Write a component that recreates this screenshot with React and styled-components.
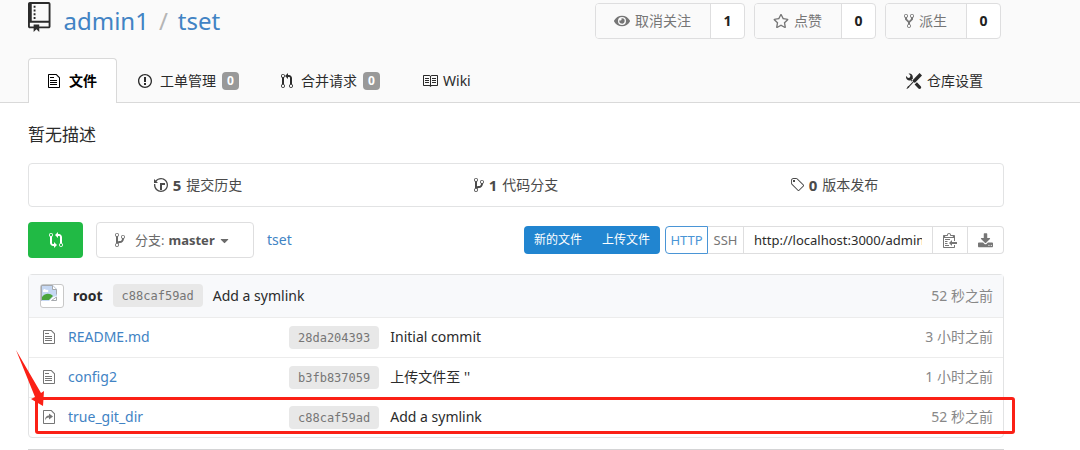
import React from 'react';
import styled, { createGlobalStyle } from 'styled-components';
import { FaEye, FaRegStar, FaCaretDown } from 'react-icons/fa';

const GlobalStyle = createGlobalStyle`
  *, *::before, *::after { box-sizing: border-box; }
  body {
    margin: 0;
    background: #fff;
    color: #2b2b2b;
    font-family: "Noto Sans", "Noto Sans CJK SC", sans-serif;
    font-size: 14px;
    line-height: 20px;
  }
  body, #root { overflow-x: clip; }
  button, input, select { font: inherit; color: inherit; margin: 0; }
  button { cursor: pointer; }
  a { color: #4183c4; text-decoration: none; }
  svg { display: block; flex: none; }
`;

const ICONS = {
  repo: [12, 'M4 9H3V8h1v1zm0-3H3v1h1V6zm0-2H3v1h1V4zm0-2H3v1h1V2zm8-1v12c0 .55-.45 1-1 1H6v2l-1.5-1.5L3 16v-2H1c-.55 0-1-.45-1-1V1c0-.55.45-1 1-1h10c.55 0 1 .45 1 1zm-1 10H1v2h2v-1h3v1h5v-2zm0-10H2v9h9V1z'],
  file: [12, 'M6 5H2V4h4v1zM2 8h7V7H2v1zm0 2h7V9H2v1zm0 2h7v-1H2v1zm10-7.5V14c0 .55-.45 1-1 1H1c-.55 0-1-.45-1-1V2c0-.55.45-1 1-1h7.5L12 4.5zM11 5L8 2H1v12h10V5z'],
  symlink: [12, 'M8.5 1H1c-.55 0-1 .45-1 1v12c0 .55.45 1 1 1h10c.55 0 1-.45 1-1V4.5L8.5 1zM11 14H1V2h7l3 3v9zM6 4.5l4 3-4 3v-2c-.98-.02-1.84.22-2.55.7-.71.48-1.19 1.25-1.45 2.3.02-1.64.39-2.88 1.13-3.73.73-.84 1.69-1.27 2.88-1.27v-2H6z'],
  issue: [14, 'M7 2.3c3.14 0 5.7 2.56 5.7 5.7s-2.56 5.7-5.7 5.7A5.71 5.71 0 0 1 1.3 8c0-3.14 2.56-5.7 5.7-5.7zM7 1C3.14 1 0 4.14 0 8s3.14 7 7 7 7-3.14 7-7-3.14-7-7-7zm1 3H6v5h2V4zm0 6H6v2h2v-2z'],
  pull: [12, 'M11 11.28V5c-.03-.78-.34-1.47-.94-2.06C9.46 2.35 8.78 2.03 8 2H7V0L4 3l3 3V4h1c.27.02.48.11.69.31.21.2.3.42.31.69v6.28A1.993 1.993 0 0 0 10 15a1.993 1.993 0 0 0 1-3.72zm-1 2.92c-.66 0-1.2-.55-1.2-1.2 0-.65.55-1.2 1.2-1.2.65 0 1.2.55 1.2 1.2 0 .65-.55 1.2-1.2 1.2zM4 3c0-1.11-.89-2-2-2a1.993 1.993 0 0 0-1 3.72v6.56A1.993 1.993 0 0 0 2 15a1.993 1.993 0 0 0 1-3.72V4.72c.59-.34 1-.98 1-1.72zm-.8 10c0 .66-.55 1.2-1.2 1.2-.65 0-1.2-.55-1.2-1.2 0-.65.55-1.2 1.2-1.2.65 0 1.2.55 1.2 1.2zM2 4.2C1.34 4.2.8 3.65.8 3c0-.65.55-1.2 1.2-1.2.65 0 1.2.55 1.2 1.2 0 .65-.55 1.2-1.2 1.2z'],
  book: [16, 'M3 5h4v1H3V5zm0 3h4V7H3v1zm0 2h4V9H3v1zm11-5h-4v1h4V5zm0 2h-4v1h4V7zm0 2h-4v1h4V9zm2-6v9c0 .55-.45 1-1 1H9.5l-1 1-1-1H2c-.55 0-1-.45-1-1V3c0-.55.45-1 1-1h5.5l1 1 1-1H15c.55 0 1 .45 1 1zm-8 .5L7.5 3H2v9h6V3.5zm7-.5H9.5l-.5.5V12h6V3z'],
  tools: [16, 'M4.48 7.27c.26.26 1.28 1.33 1.28 1.33l.56-.58-.88-.91 1.69-1.8s-.76-.74-.43-.45c.32-1.19.03-2.51-.87-3.44C4.93.5 3.66.2 2.52.51l1.93 2-.51 1.96-1.89.52-1.93-1.99C-.19 4.17.1 5.48 1 6.4c.94.98 2.29 1.26 3.48.87zm6.44 1.94l-2.33 2.3 3.84 3.98c.31.33.73.49 1.14.49.41 0 .82-.16 1.14-.49.63-.65.63-1.7 0-2.35l-3.79-3.93zM16 2.53L13.55 0 6.33 7.46l.88.91-4.31 4.46-.99.53-1.39 2.27.35.37 2.2-1.44.51-1.02L7.9 9.08l.88.91L16 2.53z'],
  history: [14, 'M8 13H6V6h5v2H8v5zM7 1C4.81 1 2.87 2.02 1.59 3.59L0 2v4h4L2.5 4.5C3.55 3.17 5.17 2.3 7 2.3c3.14 0 5.7 2.56 5.7 5.7s-2.56 5.7-5.7 5.7A5.71 5.71 0 0 1 1.3 8c0-.34.03-.67.09-1H.08C.03 7.33 0 7.66 0 8c0 3.86 3.14 7 7 7s7-3.14 7-7-3.14-7-7-7z'],
  branch: [10, 'M10 5c0-1.11-.89-2-2-2a1.993 1.993 0 0 0-1 3.72v.3c-.02.52-.23.98-.63 1.38-.4.4-.86.61-1.38.63-.83.02-1.48.16-2 .45V4.72a1.993 1.993 0 0 0-1-3.72C.88 1 0 1.89 0 3a2 2 0 0 0 1 1.72v6.56c-.59.35-1 .99-1 1.72 0 1.11.89 2 2 2 1.11 0 2-.89 2-2 0-.53-.2-1-.53-1.36.09-.06.48-.41.59-.47.25-.11.56-.17.94-.17 1.05-.05 1.95-.45 2.75-1.25S8.95 7.77 9 6.73h-.02C9.59 6.37 10 5.73 10 5zM2 1.8c.66 0 1.2.55 1.2 1.2 0 .65-.55 1.2-1.2 1.2C1.35 4.2.8 3.65.8 3c0-.65.55-1.2 1.2-1.2zm0 12.41c-.66 0-1.2-.55-1.2-1.2 0-.65.55-1.2 1.2-1.2.65 0 1.2.55 1.2 1.2 0 .65-.55 1.2-1.2 1.2zm6-8c-.66 0-1.2-.55-1.2-1.2 0-.65.55-1.2 1.2-1.2.65 0 1.2.55 1.2 1.2 0 .65-.55 1.2-1.2 1.2z'],
  fork: [10, 'M8 1a1.993 1.993 0 0 0-1 3.72V6L5 8 3 6V4.72A1.993 1.993 0 0 0 2 1a1.993 1.993 0 0 0-1 3.72V6.5l3 3v1.78A1.993 1.993 0 0 0 5 15a1.993 1.993 0 0 0 1-3.72V9.5l3-3V4.72A1.993 1.993 0 0 0 8 1zM2 4.2C1.34 4.2.8 3.65.8 3c0-.65.55-1.2 1.2-1.2.65 0 1.2.55 1.2 1.2 0 .65-.55 1.2-1.2 1.2zm3 10c-.66 0-1.2-.55-1.2-1.2 0-.65.55-1.2 1.2-1.2.65 0 1.2.55 1.2 1.2 0 .65-.55 1.2-1.2 1.2zm3-10c-.66 0-1.2-.55-1.2-1.2 0-.65.55-1.2 1.2-1.2.65 0 1.2.55 1.2 1.2 0 .65-.55 1.2-1.2 1.2z'],
  tag: [14, 'M7.73 1.73C7.26 1.26 6.62 1 5.96 1H3.5C2.13 1 1 2.13 1 3.5v2.47c0 .66.27 1.3.73 1.77l6.06 6.06c.39.39 1.02.39 1.41 0l4.59-4.59a.996.996 0 0 0 0-1.41L7.73 1.73zM2.38 7.09c-.31-.3-.47-.7-.47-1.13V3.5c0-.88.72-1.59 1.59-1.59h2.47c.42 0 .83.16 1.13.47l6.14 6.13-4.73 4.73-6.13-6.15zM3.01 3h2v2H3V3h.01z'],
  compare: [14, 'M5 12H4c-.27-.02-.48-.11-.69-.31-.21-.2-.3-.42-.31-.69V4.72A1.993 1.993 0 0 0 2 1a1.993 1.993 0 0 0-1 3.72V11c.03.78.34 1.47.94 2.06.6.59 1.28.91 2.06.94h1v2l3-3-3-3v2zM2 1.8c.66 0 1.2.55 1.2 1.2 0 .65-.55 1.2-1.2 1.2C1.35 4.2.8 3.65.8 3c0-.65.55-1.2 1.2-1.2zm11 9.48V5c-.03-.78-.34-1.47-.94-2.06-.6-.59-1.28-.91-2.06-.94H9V0L6 3l3 3V4h1c.27.02.48.11.69.31.21.2.3.42.31.69v6.28A1.993 1.993 0 0 0 12 15a1.993 1.993 0 0 0 1-3.72zm-1 2.92c-.66 0-1.2-.55-1.2-1.2 0-.65.55-1.2 1.2-1.2.65 0 1.2.55 1.2 1.2 0 .65-.55 1.2-1.2 1.2z'],
  clippy: [14, 'M2 13h4v1H2v-1zm5-6H2v1h5V7zm2 3V8l-3 3 3 3v-2h5v-2H9zM4.5 9H2v1h2.5V9zM2 12h2.5v-1H2v1zm9 1h1v2c-.02.28-.11.52-.3.7-.19.18-.42.28-.7.3H1c-.55 0-1-.45-1-1V4c0-.55.45-1 1-1h3c0-1.11.89-2 2-2 1.11 0 2 .89 2 2h3c.55 0 1 .45 1 1v5h-1V6H1v9h10v-2zM2 5h8c0-.55-.45-1-1-1H8c-.55 0-1-.45-1-1s-.45-1-1-1-1 .45-1 1-.45 1-1 1H3c-.55 0-1 .45-1 1z'],
};

function Icon({ name, size = 16 }) {
  const [w, d] = ICONS[name];
  return (
    <svg width={(w * size) / 16} height={size} viewBox={`0 0 ${w} 16`} fill="currentColor" aria-hidden="true">
      <path d={d} />
    </svg>
  );
}

function DownloadIcon() {
  return (
    <svg width="15" height="15" viewBox="0 0 1664 1600" fill="currentColor" aria-hidden="true">
      <path d="M1280 1344q0-26-19-45t-45-19-45 19-19 45 19 45 45 19 45-19 19-45zm256 0q0-26-19-45t-45-19-45 19-19 45 19 45 45 19 45-19 19-45zm128-224v320q0 40-28 68t-68 28h-1472q-40 0-68-28t-28-68v-320q0-40 28-68t68-28h465l135 136q58 56 136 56t136-56l136-136h464q40 0 68 28t28 68zm-325-569q17 41-14 70l-448 448q-18 19-45 19t-45-19l-448-448q-31-29-14-70 17-39 59-39h256v-448q0-26 19-45t45-19h256q26 0 45 19t19 45v448h256q42 0 59 39z" />
    </svg>
  );
}

const Header = styled.header`
  padding: 0 76px 0 28px;
  background: #fafafa;
  border-bottom: 1px solid #d9d9d9;
`;
const TitleRow = styled.div`
  display: flex;
  justify-content: space-between;
  align-items: center;
  height: 42px;
`;
const Title = styled.h1`
  display: flex;
  align-items: flex-start;
  margin: 0;
  font-size: 24px;
  line-height: 38px;
  font-weight: 400;
`;
const TitlePath = styled.span`
  display: flex;
  gap: 10px;
  margin-left: 13px;
`;
const Slash = styled.span`
  color: #b5b5b5;
`;
const Actions = styled.div`
  display: flex;
  gap: 9px;
  padding-right: 3px;
`;
const ActionGroup = styled.div`
  display: flex;
  height: 36px;
  border: 1px solid #dededf;
  border-radius: 4px;
  background: #fff;
  overflow: hidden;
`;
const ActionButton = styled.button`
  display: flex;
  align-items: center;
  gap: 5px;
  padding: 0 19px 0 18px;
  border: 0;
  background: #fafafa;
  color: #767676;
`;
const ActionCount = styled.a`
  display: flex;
  align-items: center;
  justify-content: center;
  width: 34px;
  border-left: 1px solid #dededf;
  color: #212121;
  font-weight: 700;
`;

const Tabs = styled.nav`
  display: flex;
  height: 45px;
  margin: 16px 0 -1px;
`;
const Tab = styled.a`
  display: flex;
  align-items: center;
  gap: ${(p) => p.$gap || 8}px;
  padding: 0 20px;
  border: 1px solid transparent;
  border-bottom: 0;
  border-radius: 4px 4px 0 0;
  color: #2b2b2b;
  ${(p) => p.$active && `
    padding: 0 19px;
    background: #fff;
    border-color: #d9d9d9;
    color: #000;
    font-weight: 700;
  `}
  ${(p) => p.$end && 'margin-left: auto;'}
`;
const Badge = styled.span`
  width: 17px;
  margin-left: -2px;
  border-radius: 4px;
  background: #999;
  color: #fff;
  font-size: 12px;
  line-height: 18px;
  font-weight: 700;
  text-align: center;
`;

const Main = styled.main`
  padding: 0 76px 0 28px;
`;
const Description = styled.p`
  margin: 0;
  padding: 20px 0 16px;
  font-size: 17px;
  line-height: 24px;
`;
const Stats = styled.nav`
  display: grid;
  grid-template-columns: repeat(3, 1fr);
  height: 44px;
  padding: 0 10px;
  border: 1px solid #e2e3e4;
  border-radius: 4px;
`;
const Stat = styled.a`
  display: flex;
  align-items: center;
  justify-content: center;
  gap: 5px;
  color: #4a4a4a;
  b { font-size: 15px; }
`;

const Toolbar = styled.div`
  display: flex;
  align-items: center;
  height: 36px;
  margin: 15px 0 16px;
`;
const CompareButton = styled.button`
  display: flex;
  align-items: center;
  justify-content: center;
  width: 55px;
  height: 36px;
  padding: 0;
  border: 0;
  border-radius: 4px;
  background: #21ba45;
  color: #fff;
`;
const BranchPicker = styled.label`
  display: flex;
  align-items: center;
  width: 158px;
  height: 36px;
  margin: 0 13px;
  padding-left: 18px;
  border: 1px solid #dededf;
  border-radius: 4px;
  color: #6b6b6b;
  font-size: 13px;
`;
const BranchLabel = styled.span`
  margin: 0 4px 0 10px;
`;
const BranchSelect = styled.select`
  appearance: none;
  field-sizing: content;
  margin-right: 3px;
  padding: 0;
  border: 0;
  background: none;
  color: #555;
  font-weight: 700;
`;
const ToolbarEnd = styled.div`
  display: flex;
  align-items: center;
  gap: 5px;
  margin-left: auto;
`;
const FileButtons = styled.div`
  display: flex;
  height: 28px;
  border-radius: 4px;
  background: #2185d0;
`;
const FileButton = styled.button`
  padding: 0 10px;
  border: 0;
  background: none;
  color: #fff;
  font-size: 12px;
`;
const Clone = styled.div`
  display: flex;
  height: 28px;
`;
const CloneButton = styled.button`
  display: flex;
  align-items: center;
  justify-content: center;
  width: 36px;
  padding: 0;
  border: 1px solid #dededf;
  border-left-width: ${(p) => (p.$joined ? 0 : 1)}px;
  background: #fff;
  color: #767676;
  font-size: 13px;
  &:first-child {
    width: 43px;
    border-color: #4a95d6;
    border-radius: 4px 0 0 4px;
    color: #4a95d6;
  }
  &:last-child { border-radius: 0 4px 4px 0; }
`;
const CloneUrl = styled.input`
  width: 188px;
  padding: 0 10px;
  border: 1px solid #dededf;
  border-left: 0;
  border-right: 0;
  background: #fff;
  font-size: 13px;
  outline: 0;
`;

const FilesPanel = styled.section`
  position: relative;
  border: 1px solid #e2e3e4;
  border-radius: 4px;
`;
const FileTable = styled.table`
  width: 100%;
  table-layout: fixed;
  border-collapse: collapse;
  th, td {
    height: 40px;
    padding: 0;
    border-top: 1px solid #ececec;
    font-weight: 400;
    text-align: left;
  }
  thead th {
    height: 42px;
    border-top: 0;
    background: #f8f9fb;
  }
`;
const NameCol = styled.col`
  width: 260px;
`;
const TimeCol = styled.col`
  width: 120px;
`;
const Cell = styled.div`
  display: flex;
  align-items: center;
  gap: ${(p) => p.$gap}px;
  padding-left: ${(p) => p.$indent || 0}px;
  color: ${(p) => p.$color || 'inherit'};
`;
const Time = styled.div`
  padding-right: 10px;
  color: #888;
  text-align: right;
`;
const Avatar = styled.span`
  display: block;
  width: 24px;
  height: 24px;
  border: 1px solid #c8c8c8;
  border-radius: 3px;
  background: #fff;
`;
const Author = styled.b`
  margin-left: -1px;
`;
const Hash = styled.a`
  padding: 2px 9px 0;
  border-radius: 4px;
  background: #e8e8e8;
  color: #767676;
  font-family: "DejaVu Sans Mono", monospace;
  font-size: 12px;
  line-height: 21px;
`;
const Highlight = styled.div`
  position: absolute;
  left: 6px;
  right: -12px;
  bottom: 3px;
  height: 37px;
  border: 3px solid #fb2016;
  border-radius: 3px;
  pointer-events: none;
`;
const Arrow = styled.svg`
  position: absolute;
  left: -13px;
  bottom: 29px;
  pointer-events: none;
`;
const NextPanel = styled.section`
  height: 1px;
  margin-top: 11px;
  border-top: 1px solid #d4d4d5;
`;

const FILES = [
  { icon: 'file', name: 'README.md', hash: '28da204393', message: 'Initial commit', time: '3 小时之前' },
  { icon: 'file', name: 'config2', hash: 'b3fb837059', message: "上传文件至 ''", time: '1 小时之前' },
  { icon: 'symlink', name: 'true_git_dir', hash: 'c88caf59ad', message: 'Add a symlink', time: '52 秒之前' },
];

function BrokenImage() {
  return (
    <svg width="16" height="16" viewBox="0 0 16 16" aria-hidden="true">
      <path d="M0 0h12l4 4v7l-4 1-4 4H0z" fill="#c6d8f3" />
      <path d="M.5 15.5V.5h11l4 4v5" fill="none" stroke="#a5a9ad" />
      <path d="M11.500 .5v4h4" fill="#fff" stroke="#a5a9ad" />
      <path d="M2 6c0-2 2-3 3-1 2-1 3 1 2 2H2z" fill="#fff" />
      <path d="M1 15v-3c3-4 8-4 11-1l-4 4z" fill="#4ba53c" />
      <path d="M15.500 12v3.500h-5z" fill="#fff" stroke="#a5a9ad" />
    </svg>
  );
}

export default function App() {
  return (
    <>
      <GlobalStyle />
      <Header>
        <TitleRow>
          <Title>
            <Icon name="repo" size={30} />
            <TitlePath>
              <a href="#owner">admin1</a>
              <Slash>/</Slash>
              <a href="#repo">tset</a>
            </TitlePath>
          </Title>
          <Actions>
            <ActionGroup>
              <ActionButton type="button"><FaEye size={16} />取消关注</ActionButton>
              <ActionCount href="#watchers">1</ActionCount>
            </ActionGroup>
            <ActionGroup>
              <ActionButton type="button"><FaRegStar size={16} />点赞</ActionButton>
              <ActionCount href="#stars">0</ActionCount>
            </ActionGroup>
            <ActionGroup>
              <ActionButton type="button"><Icon name="fork" />派生</ActionButton>
              <ActionCount href="#forks">0</ActionCount>
            </ActionGroup>
          </Actions>
        </TitleRow>
        <Tabs>
          <Tab href="#files" $active $gap={9}><Icon name="file" />文件</Tab>
          <Tab href="#issues"><Icon name="issue" />工单管理<Badge>0</Badge></Tab>
          <Tab href="#pulls"><Icon name="pull" />合并请求<Badge>0</Badge></Tab>
          <Tab href="#wiki" $gap={5}><Icon name="book" />Wiki</Tab>
          <Tab href="#settings" $end $gap={5}><Icon name="tools" />仓库设置</Tab>
        </Tabs>
      </Header>
      <Main>
        <Description>暂无描述</Description>
        <Stats>
          <Stat href="#commits"><Icon name="history" /><b>5</b>提交历史</Stat>
          <Stat href="#branches"><Icon name="branch" /><b>1</b>代码分支</Stat>
          <Stat href="#releases"><Icon name="tag" /><b>0</b>版本发布</Stat>
        </Stats>
        <Toolbar>
          <CompareButton type="button" aria-label="比较"><Icon name="compare" /></CompareButton>
          <BranchPicker>
            <Icon name="branch" />
            <BranchLabel>分支:</BranchLabel>
            <BranchSelect defaultValue="master">
              <option value="master">master</option>
            </BranchSelect>
            <FaCaretDown size={13} />
          </BranchPicker>
          <a href="#root-dir">tset</a>
          <ToolbarEnd>
            <FileButtons>
              <FileButton type="button">新的文件</FileButton>
              <FileButton type="button">上传文件</FileButton>
            </FileButtons>
            <Clone>
              <CloneButton type="button">HTTP</CloneButton>
              <CloneButton type="button" $joined>SSH</CloneButton>
              <CloneUrl readOnly aria-label="URL" value="http://localhost:3000/admin1/tset.git" />
              <CloneButton type="button" aria-label="复制"><Icon name="clippy" /></CloneButton>
              <CloneButton type="button" $joined aria-label="下载"><DownloadIcon /></CloneButton>
            </Clone>
          </ToolbarEnd>
        </Toolbar>
        <FilesPanel>
          <FileTable>
            <colgroup>
              <NameCol />
              <col />
              <TimeCol />
            </colgroup>
            <thead>
              <tr>
                <th colSpan={2}>
                  <Cell $gap={10} $indent={11}>
                    <Avatar><BrokenImage /></Avatar>
                    <Author>root</Author>
                    <Hash href="#c88caf59ad">c88caf59ad</Hash>
                    Add a symlink
                  </Cell>
                </th>
                <th><Time>52 秒之前</Time></th>
              </tr>
            </thead>
            <tbody>
              {FILES.map((f) => (
                <tr key={f.name}>
                  <td>
                    <Cell $gap={13} $indent={14} $color="#767676">
                      <Icon name={f.icon} />
                      <a href={`#${f.name}`}>{f.name}</a>
                    </Cell>
                  </td>
                  <td>
                    <Cell $gap={11}>
                      <Hash href={`#${f.hash}`}>{f.hash}</Hash>
                      {f.message}
                    </Cell>
                  </td>
                  <td><Time>{f.time}</Time></td>
                </tr>
              ))}
            </tbody>
          </FileTable>
          <Highlight />
          <Arrow width="30" height="58" viewBox="0 0 30 58" aria-hidden="true">
            <path d="M0 0L25 43L28 41L27 56L15 49L19 47Z" fill="#fb2016" />
          </Arrow>
        </FilesPanel>
        <NextPanel />
      </Main>
    </>
  );
}
